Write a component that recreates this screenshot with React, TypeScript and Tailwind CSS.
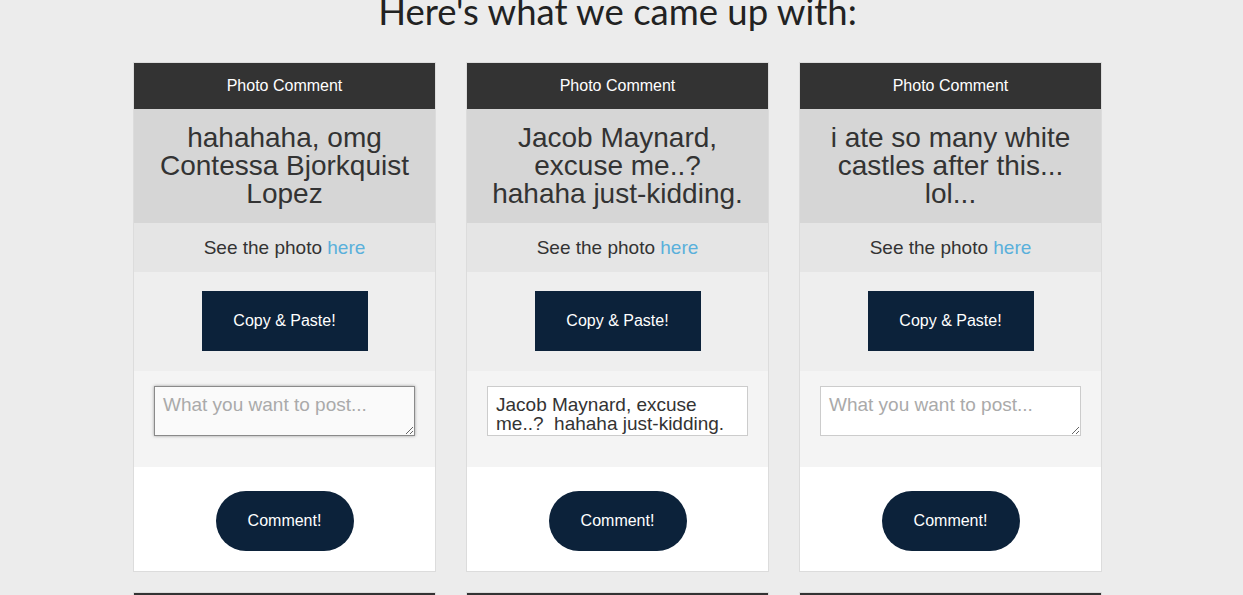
import React from 'react';

type Card = {
  quote: string;
  value?: string;
  focused?: boolean;
};

const cards: Card[] = [
  { quote: 'hahahaha, omg Contessa Bjorkquist Lopez', focused: true },
  {
    quote: 'Jacob Maynard, excuse me..? hahaha just-kidding.',
    value: 'Jacob Maynard, excuse me..?  hahaha just-kidding.',
  },
  { quote: 'i ate so many white castles after this... lol...' },
  { quote: 'so much fun at the beach today' },
  { quote: 'who is ready for the weekend?' },
  { quote: 'best friends forever and ever' },
];

function CommentCard({ card }: { card: Card }) {
  return (
    <div className="w-[303px] border border-[#dcdcdc] bg-white mb-[20px] font-['Liberation_Sans',Arial,sans-serif]">
      <div className="h-[46px] bg-[#333333] text-white text-[16px] flex items-center justify-center">
        Photo Comment
      </div>
      <div className="bg-[#d6d6d6] h-[114px] px-[18px] flex items-center justify-center text-center text-[28px] leading-[28px] text-[#333333]">
        {card.quote}
      </div>
      <div className="bg-[#e5e5e5] h-[49px] pt-[2px] flex items-center justify-center text-[19px] text-[#333333]">
        See the photo&nbsp;<a className="text-[#5ab0db]">here</a>
      </div>
      <div className="bg-[#eeeeee] h-[99px] flex items-start justify-center pt-[19px]">
        <button className="w-[166px] h-[60px] bg-[#0c223a] text-white text-[16px]">
          Copy &amp; Paste!
        </button>
      </div>
      <div className="bg-[#f4f4f4] h-[96px] flex items-start justify-center pt-[15px]">
        {card.focused ? (
          <textarea
            placeholder="What you want to post..."
            className="w-[261px] h-[50px] border border-[#8a8a8a] bg-[#fafafa] shadow-[0_0_3px_rgba(0,0,0,0.35)] px-[8px] py-[8px] text-[19px] leading-[20px] text-[#333] placeholder:text-[#aaaaaa] outline-none"
          />
        ) : card.value ? (
          <textarea
            defaultValue={card.value}
            className="w-[261px] h-[50px] border border-[#cccccc] bg-white px-[8px] py-[8px] text-[19px] leading-[19px] text-[#333] resize-none overflow-hidden outline-none"
          />
        ) : (
          <textarea
            placeholder="What you want to post..."
            className="w-[261px] h-[50px] border border-[#cccccc] bg-white px-[8px] py-[8px] text-[19px] leading-[20px] text-[#333] placeholder:text-[#aaaaaa] outline-none"
          />
        )}
      </div>
      <div className="bg-white h-[104px] flex items-start justify-center pt-[24px]">
        <button className="w-[138px] h-[60px] rounded-full bg-[#0c223a] text-white text-[16px]">
          Comment!
        </button>
      </div>
    </div>
  );
}

export default function App() {
  return (
    <div className="min-h-screen bg-[#ececec] overflow-hidden">
      <h1 className="-mt-[10px] text-center text-[36.5px] leading-[1.2] text-[#222] font-['Lato',sans-serif] pr-[8px]">
        Here's what we came up with:
      </h1>
      <div className="ml-[133px] mt-[28px] w-[969px] flex flex-wrap gap-x-[30px]">
        {cards.map((c, i) => (
          <CommentCard key={i} card={c} />
        ))}
      </div>
    </div>
  );
}
